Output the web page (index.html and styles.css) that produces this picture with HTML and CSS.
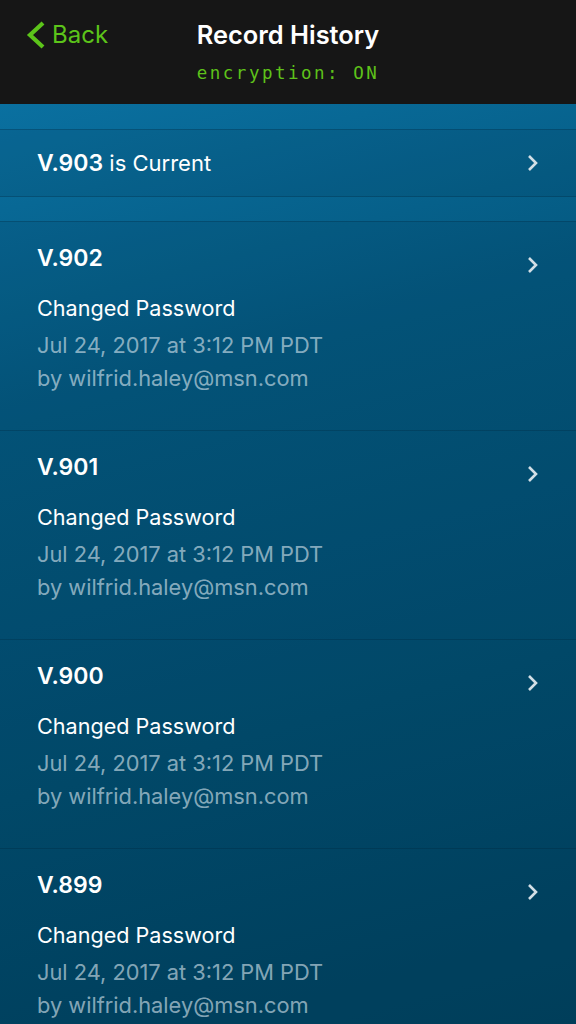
FILE: index.html
```html
<!DOCTYPE html>
<html lang="en">
<head>
    <meta charset="UTF-8">
    <meta name="viewport" content="width=device-width, initial-scale=1.0">
    <title>Record History</title>
    <link rel="stylesheet" href="styles.css">
</head>
<body>
    <header class="nav">
        <div class="nav-row">
            <a class="back" href="#">
                <svg class="back-icon" width="20" height="28" viewBox="0 0 20 28">
                    <polyline points="17,2 4,14 17,26" fill="none" stroke="#5cc41a" stroke-width="4.2" stroke-linecap="butt" stroke-linejoin="miter"/>
                </svg>
                <span>Back</span>
            </a>
            <h1 class="nav-title">Record History</h1>
            <div></div>
        </div>
        <div class="nav-sub">encryption: ON</div>
    </header>

    <main class="list">
        <div class="band top"></div>
        <a class="row current" href="#">
            <span class="current-text"><strong>V.903</strong> is Current</span>
            <svg class="chevron" width="12" height="18" viewBox="0 0 12 18"><polyline points="2,2 9,9 2,16" fill="none" stroke="#d3dfe6" stroke-width="2.6"/></svg>
        </a>
        <div class="band"></div>

        <a class="row version" href="#">
            <div class="info">
                <div class="ver">V.902</div>
                <div class="action">Changed Password</div>
                <div class="meta">Jul 24, 2017 at 3:12 PM PDT</div>
                <div class="meta">by wilfrid.haley@msn.com</div>
            </div>
            <svg class="chevron" width="12" height="18" viewBox="0 0 12 18"><polyline points="2,2 9,9 2,16" fill="none" stroke="#d3dfe6" stroke-width="2.6"/></svg>
        </a>
        <a class="row version" href="#">
            <div class="info">
                <div class="ver">V.901</div>
                <div class="action">Changed Password</div>
                <div class="meta">Jul 24, 2017 at 3:12 PM PDT</div>
                <div class="meta">by wilfrid.haley@msn.com</div>
            </div>
            <svg class="chevron" width="12" height="18" viewBox="0 0 12 18"><polyline points="2,2 9,9 2,16" fill="none" stroke="#d3dfe6" stroke-width="2.6"/></svg>
        </a>
        <a class="row version" href="#">
            <div class="info">
                <div class="ver">V.900</div>
                <div class="action">Changed Password</div>
                <div class="meta">Jul 24, 2017 at 3:12 PM PDT</div>
                <div class="meta">by wilfrid.haley@msn.com</div>
            </div>
            <svg class="chevron" width="12" height="18" viewBox="0 0 12 18"><polyline points="2,2 9,9 2,16" fill="none" stroke="#d3dfe6" stroke-width="2.6"/></svg>
        </a>
        <a class="row version" href="#">
            <div class="info">
                <div class="ver">V.899</div>
                <div class="action">Changed Password</div>
                <div class="meta">Jul 24, 2017 at 3:12 PM PDT</div>
                <div class="meta">by wilfrid.haley@msn.com</div>
            </div>
            <svg class="chevron" width="12" height="18" viewBox="0 0 12 18"><polyline points="2,2 9,9 2,16" fill="none" stroke="#d3dfe6" stroke-width="2.6"/></svg>
        </a>
    </main>
</body>
</html>
```

FILE: styles.css
```css
html, body {
    margin: 0;
    padding: 0;
}

body {
    width: 576px;
    height: 1024px;
    overflow: hidden;
    font-family: Inter, "Noto Sans", sans-serif;
    background: #003e5a;
    color: white;
}

a {
    color: inherit;
    text-decoration: none;
}

.nav {
    height: 104px;
    background: #161616;
    box-sizing: border-box;
    padding-top: 19px;
}

.nav-row {
    display: grid;
    grid-template-columns: 1fr auto 1fr;
    align-items: center;
    height: 30px;
}

.back {
    display: flex;
    align-items: center;
    gap: 6px;
    padding-left: 26px;
    color: #5cc41a;
    font-size: 24px;
}

.nav-title {
    margin: 0;
    font-size: 25.4px;
    font-weight: 600;
}

.nav-sub {
    margin-top: 14px;
    text-align: center;
    font-family: "DejaVu Sans Mono", monospace;
    font-size: 17.5px;
    letter-spacing: 2.5px;
    color: #5ec21a;
}

.list {
    height: 920px;
    background: linear-gradient(165deg, #0a70a0 0%, #04587f 30%, #00425f 100%);
}

.band {
    height: 24px;
}

.band.top {
    height: 25px;
}

.row {
    display: flex;
    justify-content: space-between;
    border-top: 1px solid rgba(0, 30, 50, 0.25);
    background: rgba(0, 25, 45, 0.1);
    padding: 0 37px 0 37px;
}

.current {
    height: 66px;
    align-items: center;
    border-bottom: 1px solid rgba(0, 30, 50, 0.25);
}

.current-text {
    font-size: 22px;
}

.current-text strong {
    font-size: 23px;
    font-weight: 600;
}

.version {
    height: 209px;
    box-sizing: border-box;
    padding-top: 21px;
    align-items: flex-start;
}

.version .chevron {
    margin-top: 13px;
}

.ver {
    font-size: 23px;
    font-weight: 600;
    line-height: 30px;
    margin-bottom: 20px;
}

.action {
    font-size: 21.6px;
    line-height: 30px;
    margin-bottom: 6px;
}

.meta {
    font-size: 21.8px;
    line-height: 33px;
    color: rgba(220, 232, 240, 0.62);
}

.chevron {
    flex: none;
}
```
